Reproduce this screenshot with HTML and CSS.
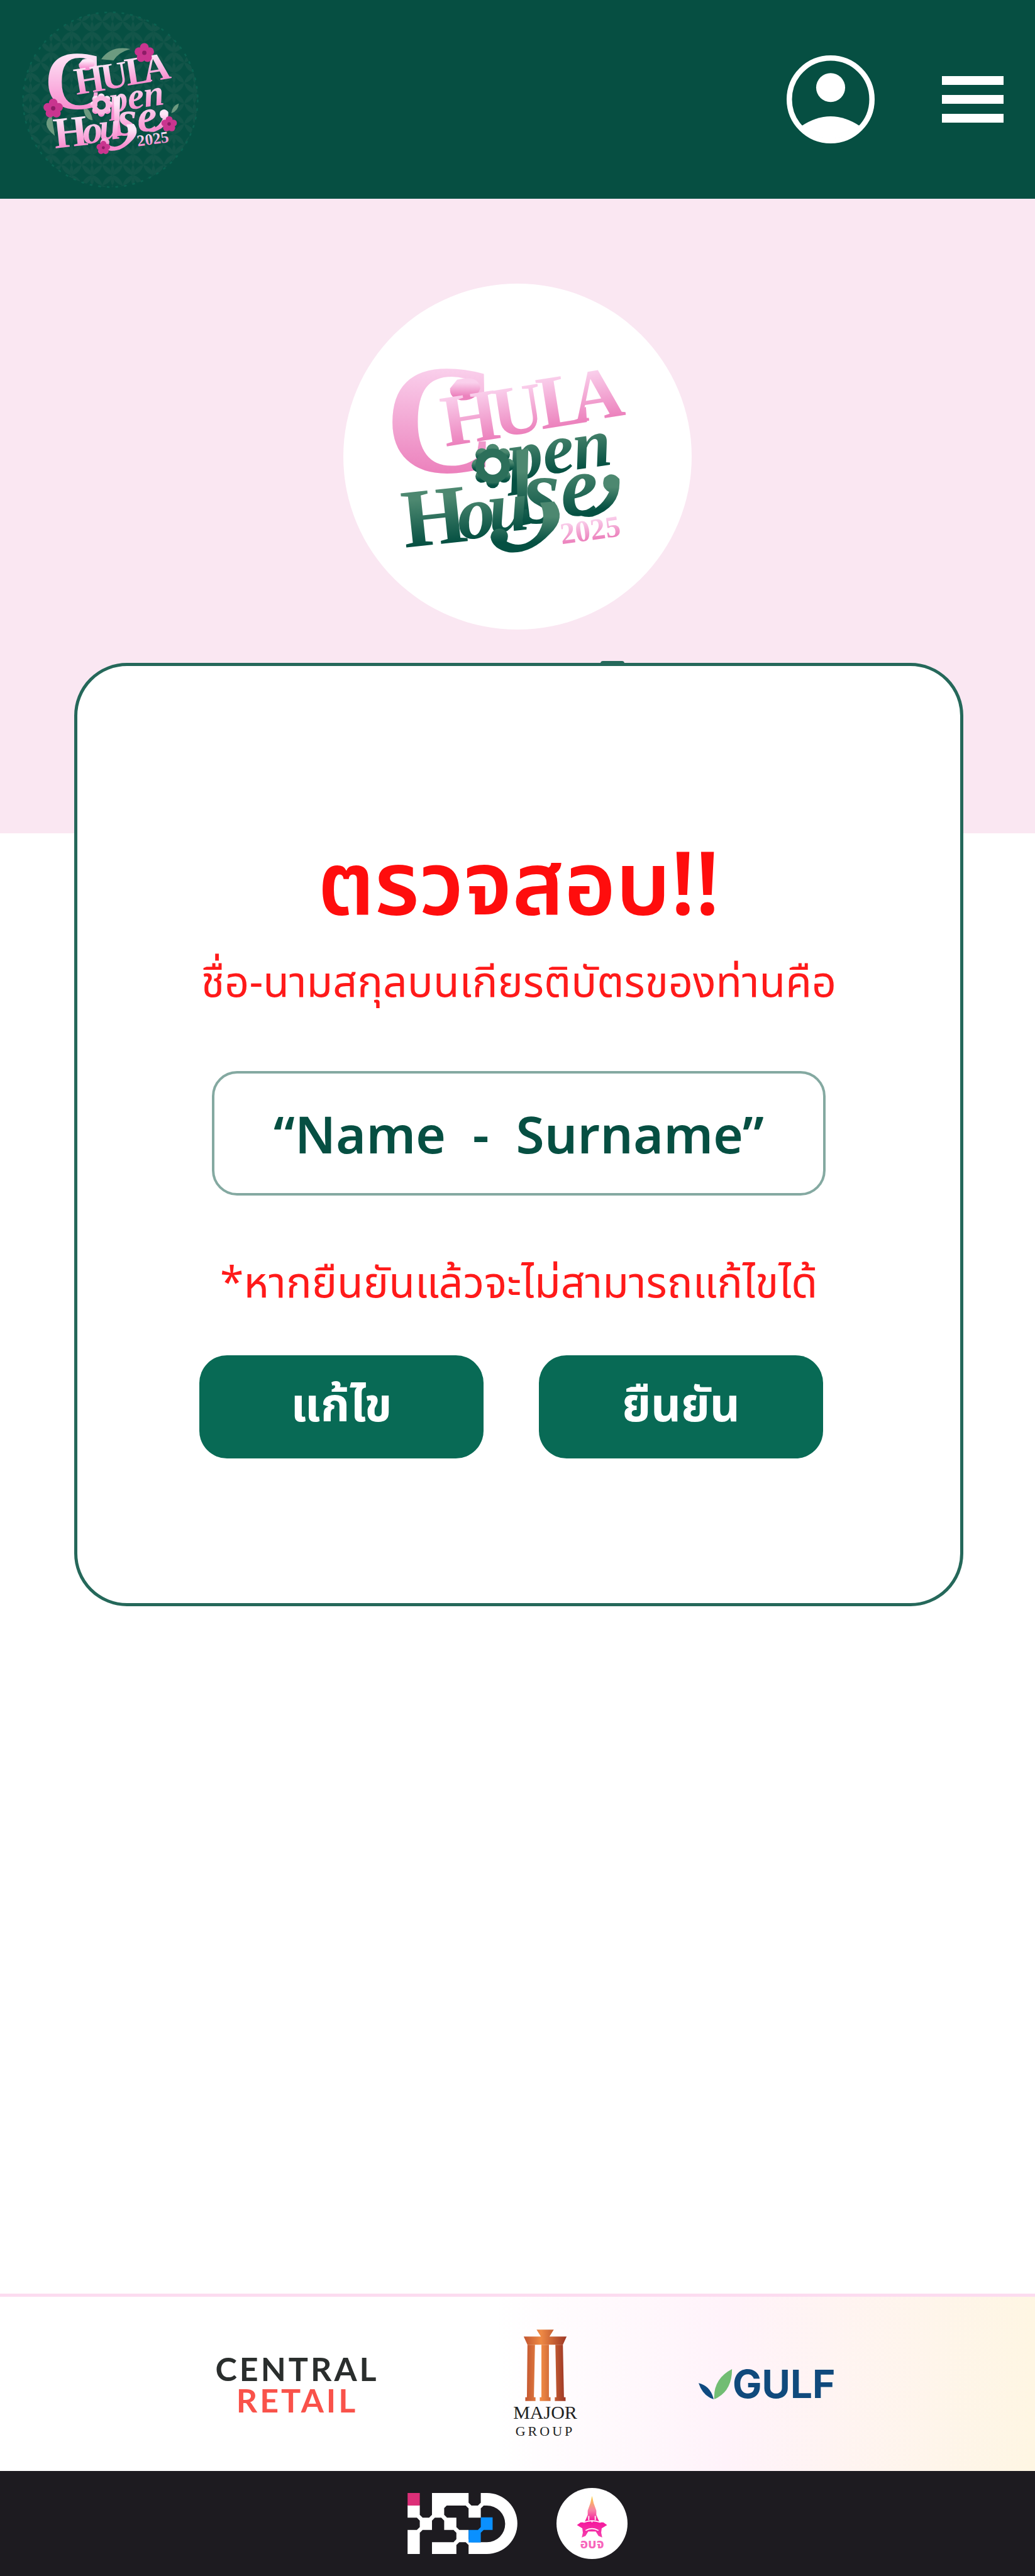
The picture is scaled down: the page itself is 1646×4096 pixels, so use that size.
FILE: index.html
```html
<!DOCTYPE html>
<html lang="th">
<head>
<meta charset="utf-8">
<meta name="viewport" content="width=device-width, initial-scale=1">
<title>Chula Open House 2025</title>
<link rel="stylesheet" href="styles.css">
</head>
<body>
<svg class="defs" width="0" height="0" aria-hidden="true">
  <defs>
    <linearGradient id="pink" x1="0" y1="0" x2="0" y2="1"><stop offset=".2" stop-color="#fad0ec"/><stop offset=".8" stop-color="#ec82bd"/></linearGradient>
    <linearGradient id="green" x1="0" y1="0" x2="0" y2="1"><stop offset=".3" stop-color="#4d8870"/><stop offset=".8" stop-color="#055042"/></linearGradient>
    <linearGradient id="rose" x1="0" y1="0" x2="0" y2="1"><stop offset=".2" stop-color="#fde6f7"/><stop offset=".8" stop-color="#f88fd0"/></linearGradient>
    <linearGradient id="copper" x1="0" y1="0" x2="1" y2="0"><stop offset="0" stop-color="#c1542f"/><stop offset=".4" stop-color="#ef8a45"/><stop offset="1" stop-color="#9c3524"/></linearGradient>
    <linearGradient id="spire" x1="0" y1="0" x2="0" y2="1"><stop offset="0" stop-color="#fbd23c"/><stop offset=".35" stop-color="#f77fa8"/><stop offset=".6" stop-color="#f5159b"/><stop offset="1" stop-color="#f53fae"/></linearGradient>
    <pattern id="petals" width="38" height="38" patternUnits="userSpaceOnUse">
      <g fill="#135549"><path d="M0 0Q16 4 19 19Q4 16 0 0M38 0Q34 16 19 19Q22 4 38 0M0 38Q4 22 19 19Q16 34 0 38M38 38Q22 34 19 19Q34 22 38 38"/><path d="M19 0q6 9 0 17q-6-8 0-17M19 21q6 9 0 17q-6-8 0-17"/></g>
    </pattern>
    <symbol id="wordmark" viewBox="700 650 480 390" overflow="visible">
      <g class="mark-top">
        <text x="712" y="876" font-size="290">C</text>
        <path d="M846 704q40-10 43 16q-8 24-36 22q-22-4-20-22z"/>
        <g transform="rotate(-9 950 800)">
          <text x="822" y="808" font-size="136">H</text>
          <text x="916" y="806" font-size="132">U</text>
          <text x="1003" y="804" font-size="140">L</text>
          <text x="1064" y="802" font-size="136">A</text>
        </g>
      </g>
      <g class="mark-low">
        <g transform="rotate(-8 950 880)">
          <text x="944" y="890" font-size="130">p</text>
          <text x="1009" y="888" font-size="132">e</text>
          <text x="1066" y="887" font-size="128">n</text>
        </g>
        <path d="M956 835l22-4l-2 90l6 50l-30 6l6-30z"/>
        <g transform="rotate(-6 800 1000)">
          <text x="748" y="1010" font-size="154" class="slab">H</text>
          <text x="850" y="1006" font-size="140">o</text>
          <text x="908" y="1000" font-size="136">u</text>
          <text x="1045" y="984" font-size="160">e</text>
        </g>
        <path d="M1062 950q44 6 66-38q-16-8-9-26q14-14 28 2q4 52-50 70q-20 2-35-8z"/>
        <text x="968" y="970" font-size="176">s</text>
        <path d="M1026 930q24 30-8 60q-36 38-76 34q-30-6-34-28q2-16 18-16q20 4 12 24q30 16 56-12q20-28 6-60z"/>
        <g><circle cx="912" cy="835" r="12"/><circle cx="932" cy="843" r="12"/><circle cx="940" cy="862" r="12"/><circle cx="933" cy="883" r="12"/><circle cx="912" cy="893" r="12"/><circle cx="892" cy="883" r="12"/><circle cx="885" cy="863" r="12"/><circle cx="892" cy="843" r="12"/></g>
        <circle cx="912" cy="864" r="24" fill="none" class="ring"/>
      </g>
      <g class="mark-top"><text x="1040" y="1009" font-size="56" transform="rotate(-8 1040 1009)">2025</text></g>
    </symbol>
    <g id="flower"><circle cx="0" cy="-10" r="8"/><circle cx="10" cy="-2" r="8"/><circle cx="6" cy="9" r="8"/><circle cx="-6" cy="9" r="8"/><circle cx="-10" cy="-2" r="8"/><circle r="4" fill="#8c1d66"/></g>
  </defs>
</svg>

<header class="topbar">
  <a class="brand" href="#" aria-label="Chula Open House 2025">
    <svg viewBox="40 18 330 330">
      <circle cx="205" cy="183" r="162" fill="url(#petals)" stroke="#0b6150" stroke-width="3" stroke-dasharray="5 11"/>
      <g fill="#6d9a80"><path d="M188 108q18-26 54-19q-22 6-31 21z"/><path d="M96 212q-22 16 6 38z"/><path d="M155 196q14 4 17 25q-16-2-17-25z"/><path d="M318 208q2-14 14-18q-1 14-14 18z"/></g>
      <use href="#wordmark" class="wordmark-light" x="76" y="80" width="254" height="206"/>
      <g fill="#c9358f"><use href="#flower" transform="translate(268 96)"/><use href="#flower" transform="translate(99 199)"/><use href="#flower" transform="translate(314 228) scale(.8)"/><use href="#flower" transform="translate(192 272) scale(.7)"/></g>
    </svg>
  </a>
  <nav class="actions">
    <button class="icon-btn account" type="button" aria-label="บัญชีผู้ใช้">
      <svg viewBox="0 0 164 164"><circle cx="82" cy="82" r="77" fill="none" stroke="#fff" stroke-width="10"/><circle cx="82" cy="60" r="27" fill="#fff"/><path d="M27 132Q82 95 137 132A77 77 0 0 1 27 132z" fill="#fff"/></svg>
    </button>
    <button class="icon-btn menu" type="button" aria-label="เมนู"><span></span><span></span><span></span></button>
  </nav>
</header>

<main>
  <section class="hero">
    <div class="emblem">
      <svg viewBox="635 526 646 641" role="img" aria-label="Chula Open House 2025"><use href="#wordmark" class="wordmark-color" x="700" y="650" width="480" height="390"/></svg>
    </div>
    <div class="hero-tab"></div>
  </section>
  <section class="card">
    <h1>ตรวจสอบ!!</h1>
    <p class="lead">ชื่อ-นามสกุลบนเกียรติบัตรของท่านคือ</p>
    <p class="name">“Name&nbsp; -&nbsp; Surname”</p>
    <p class="note">*หากยืนยันแล้วจะไม่สามารถแก้ไขได้</p>
    <div class="buttons">
      <button type="button">แก้ไข</button>
      <button type="button">ยืนยัน</button>
    </div>
  </section>
</main>

<footer>
  <div class="sponsors">
    <div class="central"><span>CENTRAL</span><span class="retail">RETAIL</span></div>
    <div class="major">
      <svg viewBox="0 0 82 133"><g fill="url(#copper)"><path d="M25 0h32l-8 13h32l-7 15H8L1 13h32z"/><path d="M8 28h14l-2 98h3v7H4v-7h3zM34 28h14v98h3v7H31v-7h3zM60 28h14l2 98h3v7H59v-7h3z"/></g></svg>
      <span class="major-name">MAJOR</span><span class="major-group">GROUP</span>
    </div>
    <div class="gulf">
      <svg viewBox="0 0 63 56"><path d="M0 26Q22 31 28 56Q8 50 0 26z" fill="#0f4a80"/><path d="M62 0Q62 42 29 56Q27 18 62 0z" fill="#72bd73"/></svg>
      <span>GULF</span>
    </div>
  </div>
  <div class="bottom">
    <svg class="isd" viewBox="170 158 612 340" role="img" aria-label="ISD">
      <path fill="#fff" d="M170 226h68v70h-68zM238 296h68v68h-68zM170 364h68v134h-68zM306 158h204v70H388l-14 14v54h-68zM374 296h68v68h-68zM442 364h68v68h-68zM306 432h136v66H306zM510 228h68v68h-68z"/>
      <path fill="#fff" d="M578 158h34a170 170 0 0 1 0 340H510v-66h102a102 102 0 0 0 0-204h-34z"/>
      <path fill="#fff" d="M238 280l16 16l-16 16l-16-16zM238 348l16 16l-16 16l-16-16zM306 280l16 16l-16 16l-16-16zM374 280l16 16l-16 16l-16-16zM442 348l16 16l-16 16l-16-16zM510 212l16 16l-16 16l-16-16zM578 212l16 16l-16 16l-16-16zM442 416l16 16l-16 16l-16-16zM510 416l16 16l-16 16l-16-16z"/>
      <path fill="#dd2f78" d="M170 158h68v70h-68z"/>
      <path fill="#0a90ff" d="M578 294h66v70h-50l-16 16v54h-68v-70h52l16-16z"/>
    </svg>
    <svg class="seal" viewBox="0 0 132 132" role="img" aria-label="อบจ">
      <circle cx="66" cy="66" r="66" fill="#fff"/>
      <path fill="url(#spire)" d="M66 15l3 13l5 14v8l5 12l3 2h5l7 5l-10 6l-1 8l2 9l-7-3l-5-8h-14l-5 8l-7 3l2-9l-1-8l-10-6l7-5h5l3-2l5-12v-8l5-14z"/>
      <path fill="none" stroke="#fff" stroke-width="2" d="M60 52v8M72 52v8M50 64q16-6 32 0M54 79q12-7 24 0M66 60v4"/>
      <text x="66" y="112" text-anchor="middle" class="seal-text">อบจ</text>
    </svg>
  </div>
</footer>
</body>
</html>
```
FILE: styles.css
```css
* { box-sizing: border-box; }
body {
  margin: 0;
  min-height: 100vh;
  display: flex;
  flex-direction: column;
  background: #fff;
  font-family: "Noto Sans Thai", "Noto Sans", "Open Sans", sans-serif;
}
h1, p { margin: 0; }
svg { display: block; }
button { border: 0; font: inherit; cursor: pointer; }
.defs { position: absolute; }
main { flex: 1; }

.topbar {
  display: flex;
  justify-content: space-between;
  align-items: center;
  height: 316px;
  padding: 0 50px 0 34px;
  background: #064f42;
}
.brand svg { width: 283px; height: 283px; }
.actions { display: flex; align-items: center; gap: 107px; }
.icon-btn { padding: 0; background: none; }
.account svg { width: 140px; height: 140px; }
.menu { display: flex; flex-direction: column; gap: 16px; width: 98px; }
.menu span { height: 14px; background: #fff; }

#wordmark text { font-family: "Liberation Serif", serif; font-weight: 700; }
.wordmark-color { --top: url(#pink); --low: url(#green); --ring: #2c6f5a; }
.wordmark-light { --top: url(#rose); --low: url(#rose); --ring: #fbb5e0; }
.mark-top { fill: var(--top); }
.mark-low { fill: var(--low); font-style: italic; }
.slab { font-style: normal; }
.ring { stroke: var(--ring); stroke-width: 16; }

.hero { height: 1009px; padding-top: 135px; background: #fae7f2; }
.emblem {
  width: 554px;
  height: 550px;
  margin: 0 auto;
  border-radius: 50%;
  background: #fff;
}
.emblem svg { width: 100%; height: 100%; }
.hero-tab { width: 38px; height: 12px; margin: 50px 0 0 58%; border-radius: 4px; background: #25685a; }

.card {
  position: relative;
  display: flex;
  flex-direction: column;
  align-items: center;
  margin: -271px 114px 0 118px;
  padding: 272px 96px 230px;
  border: 5px solid #25685a;
  border-radius: 84px;
  background: #fff;
  text-align: center;
}
h1 { color: #ff0d0d; font-size: 140px; line-height: 160px; font-weight: 600; }
.lead, .note { color: #ff1a1a; font-size: 68px; line-height: 100px; white-space: nowrap; }
.lead { margin-top: 24px; }
.name {
  width: 976px;
  max-width: 100%;
  margin: 88px 0 92px;
  padding-top: 14px;
  border: 4px solid #84a9a1;
  border-radius: 40px;
  color: #064f42;
  font-size: 82px;
  line-height: 176px;
  font-weight: 600;
}
.buttons { display: flex; gap: 88px; margin: 62px 24px 0 0; }
.buttons button {
  width: 452px;
  height: 164px;
  border-radius: 44px;
  background: #086a55;
  color: #fff;
  font-size: 74px;
  font-weight: 700;
}

.sponsors {
  display: flex;
  align-items: center;
  height: 282px;
  padding-left: 343px;
  border-top: 5px solid #fcdcf0;
  background: linear-gradient(90deg, #fff 48%, #fff3fa 70%, #fef6e3 100%);
}
.central { display: flex; flex-direction: column; align-items: center; width: 259px; color: #2a2e2d; font: 700 52px/50px Lato, sans-serif; letter-spacing: 4px; }
.retail { color: #f9524a; }
.major { display: flex; flex-direction: column; align-items: center; width: 104px; margin-left: 213px; font-family: "Liberation Serif", serif; color: #222; }
.major svg { width: 70px; height: 114px; }
.major-name { font-size: 30px; line-height: 36px; }
.major-group { font-size: 22px; line-height: 24px; letter-spacing: 4px; }
.gulf { display: flex; align-items: center; margin-left: 192px; color: #104a7c; font: 700 62px/64px Inter, sans-serif; }
.gulf svg { width: 54px; height: 48px; }
.bottom { display: flex; justify-content: center; align-items: center; gap: 62px; height: 167px; background: #1d1b20; }
.isd { width: 175px; height: 97px; }
.seal { width: 113px; height: 113px; }
.seal-text { font: 700 25px "Noto Sans Thai", "Noto Sans", sans-serif; fill: #f764bb; }
```
